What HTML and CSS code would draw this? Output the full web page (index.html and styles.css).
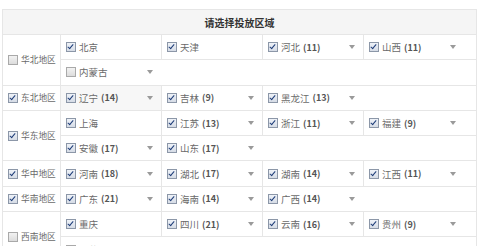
FILE: index.html
```html
<!DOCTYPE html>
<html lang="zh">
<head>
<meta charset="utf-8">
<title>请选择投放区域</title>
<link rel="stylesheet" href="styles.css">
</head>
<body>
<table class="regions">
  <colgroup>
    <col class="c-area"><col class="c-prov"><col class="c-prov"><col class="c-prov"><col class="c-last">
  </colgroup>
  <thead>
    <tr><th colspan="5">请选择投放区域</th></tr>
  </thead>
  <tbody>
    <tr>
      <td class="area" rowspan="2"><div class="item"><span class="cb"></span><span class="name">华北地区</span></div></td>
      <td><div class="item"><span class="lbl"><span class="cb on"></span><span class="name">北京</span></span></div></td>
      <td><div class="item"><span class="lbl"><span class="cb on"></span><span class="name">天津</span></span></div></td>
      <td><div class="item"><span class="lbl"><span class="cb on"></span><span class="name">河北</span><b class="num">(11)</b></span><i class="arrow"></i></div></td>
      <td><div class="item"><span class="lbl"><span class="cb on"></span><span class="name">山西</span><b class="num">(11)</b></span><i class="arrow"></i></div></td>
    </tr>
    <tr>
      <td><div class="item"><span class="lbl"><span class="cb"></span><span class="name">内蒙古</span></span><i class="arrow"></i></div></td>
      <td class="blank" colspan="3"></td>
    </tr>
    <tr>
      <td class="area"><div class="item"><span class="cb on"></span><span class="name">东北地区</span></div></td>
      <td class="hover"><div class="item"><span class="lbl"><span class="cb on"></span><span class="name">辽宁</span><b class="num">(14)</b></span><i class="arrow"></i></div></td>
      <td><div class="item"><span class="lbl"><span class="cb on"></span><span class="name">吉林</span><b class="num">(9)</b></span><i class="arrow"></i></div></td>
      <td><div class="item"><span class="lbl"><span class="cb on"></span><span class="name">黑龙江</span><b class="num">(13)</b></span><i class="arrow"></i></div></td>
      <td class="blank"></td>
    </tr>
    <tr>
      <td class="area" rowspan="2"><div class="item"><span class="cb on"></span><span class="name">华东地区</span></div></td>
      <td><div class="item"><span class="lbl"><span class="cb on"></span><span class="name">上海</span></span></div></td>
      <td><div class="item"><span class="lbl"><span class="cb on"></span><span class="name">江苏</span><b class="num">(13)</b></span><i class="arrow"></i></div></td>
      <td><div class="item"><span class="lbl"><span class="cb on"></span><span class="name">浙江</span><b class="num">(11)</b></span><i class="arrow"></i></div></td>
      <td><div class="item"><span class="lbl"><span class="cb on"></span><span class="name">福建</span><b class="num">(9)</b></span><i class="arrow"></i></div></td>
    </tr>
    <tr>
      <td><div class="item"><span class="lbl"><span class="cb on"></span><span class="name">安徽</span><b class="num">(17)</b></span><i class="arrow"></i></div></td>
      <td><div class="item"><span class="lbl"><span class="cb on"></span><span class="name">山东</span><b class="num">(17)</b></span><i class="arrow"></i></div></td>
      <td class="blank" colspan="2"></td>
    </tr>
    <tr>
      <td class="area"><div class="item"><span class="cb on"></span><span class="name">华中地区</span></div></td>
      <td><div class="item"><span class="lbl"><span class="cb on"></span><span class="name">河南</span><b class="num">(18)</b></span><i class="arrow"></i></div></td>
      <td><div class="item"><span class="lbl"><span class="cb on"></span><span class="name">湖北</span><b class="num">(17)</b></span><i class="arrow"></i></div></td>
      <td><div class="item"><span class="lbl"><span class="cb on"></span><span class="name">湖南</span><b class="num">(14)</b></span><i class="arrow"></i></div></td>
      <td><div class="item"><span class="lbl"><span class="cb on"></span><span class="name">江西</span><b class="num">(11)</b></span><i class="arrow"></i></div></td>
    </tr>
    <tr>
      <td class="area"><div class="item"><span class="cb on"></span><span class="name">华南地区</span></div></td>
      <td><div class="item"><span class="lbl"><span class="cb on"></span><span class="name">广东</span><b class="num">(21)</b></span><i class="arrow"></i></div></td>
      <td><div class="item"><span class="lbl"><span class="cb on"></span><span class="name">海南</span><b class="num">(14)</b></span><i class="arrow"></i></div></td>
      <td><div class="item"><span class="lbl"><span class="cb on"></span><span class="name">广西</span><b class="num">(14)</b></span><i class="arrow"></i></div></td>
      <td class="blank"></td>
    </tr>
    <tr>
      <td class="area" rowspan="2"><div class="item"><span class="cb"></span><span class="name">西南地区</span></div></td>
      <td><div class="item"><span class="lbl"><span class="cb on"></span><span class="name">重庆</span></span></div></td>
      <td><div class="item"><span class="lbl"><span class="cb on"></span><span class="name">四川</span><b class="num">(21)</b></span><i class="arrow"></i></div></td>
      <td><div class="item"><span class="lbl"><span class="cb on"></span><span class="name">云南</span><b class="num">(16)</b></span><i class="arrow"></i></div></td>
      <td><div class="item"><span class="lbl"><span class="cb on"></span><span class="name">贵州</span><b class="num">(9)</b></span><i class="arrow"></i></div></td>
    </tr>
    <tr>
      <td><div class="item"><span class="lbl"><span class="cb"></span><span class="name">西藏自治区</span></span><i class="arrow"></i></div></td>
      <td class="blank" colspan="3"></td>
    </tr>
  </tbody>
</table>
</body>
</html>
```

FILE: styles.css
```css
html, body {
  margin: 0;
  padding: 0;
  background: #fff;
}

body {
  padding: 9px 0 0 2px;
  font-family: "Noto Sans CJK SC", "Noto Sans", sans-serif;
  font-size: 9.5px;
  color: #6a6a6a;
  overflow: hidden;
}

.regions {
  border-collapse: collapse;
  table-layout: fixed;
  width: 475px;
}

.c-area { width: 58px; }
.c-prov { width: 101px; }
.c-last { width: 113px; }

.regions th,
.regions td {
  border: 1px solid #e6e6e6;
  padding: 0;
}

.regions th {
  height: 24px;
  background: #f5f5f5;
  font-size: 10px;
  font-weight: 700;
  color: #333;
  text-align: center;
}

.regions tbody tr {
  height: 25.3px;
}

.regions td.blank {
  border-left-style: hidden;
}

.regions td.hover {
  background: #f7f7f7;
}

.item {
  display: flex;
  align-items: center;
  padding-left: 5px;
  white-space: nowrap;
}

.area .item {
  padding-left: 5px;
  font-size: 8.7px;
}

.lbl {
  display: flex;
  align-items: center;
  width: 81px;
  flex: none;
}

.cb {
  position: relative;
  flex: none;
  width: 8px;
  height: 8px;
  border: 1px solid #a9a9a9;
  background: linear-gradient(#f2f2f2, #dcdcdc);
  margin-right: 3px;
}

.cb.on {
  border-color: #8c97a8;
  background: linear-gradient(#eef2f8, #d6dce6);
}

.cb.on::after {
  content: "";
  position: absolute;
  left: 2px;
  top: 0;
  width: 2px;
  height: 5px;
  border: solid #1d3c78;
  border-width: 0 1.5px 1.5px 0;
  transform: rotate(40deg);
}

.num {
  margin-left: 3px;
  font-weight: 700;
  font-size: 9px;
  color: #555;
}

.arrow {
  flex: none;
  width: 0;
  height: 0;
  border-left: 3.5px solid transparent;
  border-right: 3.5px solid transparent;
  border-top: 4px solid #9a9a9a;
}
```
